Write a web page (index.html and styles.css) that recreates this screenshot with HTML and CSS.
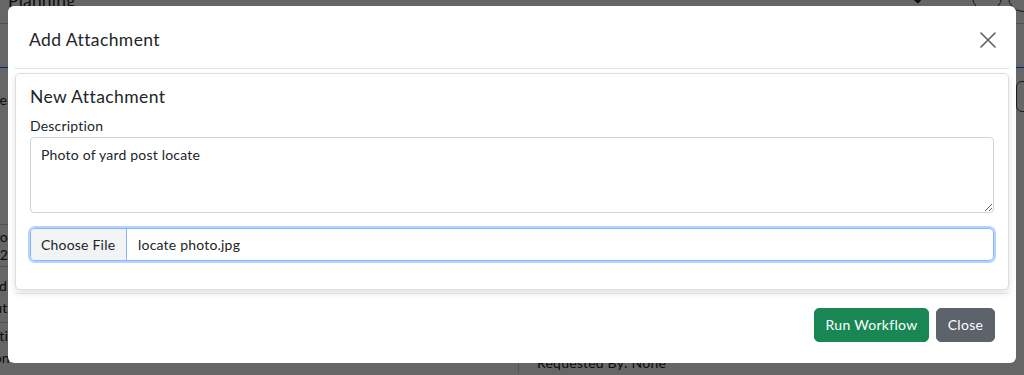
FILE: index.html
```html
<!DOCTYPE html>
<html lang="en">
<head>
<meta charset="utf-8">
<title>Add Attachment</title>
<link rel="stylesheet" href="styles.css">
</head>
<body>
<div class="page">
  <div class="topbar">
    <div class="page-title">Planning</div>
    <div class="top-icons">
      <span class="pencil"></span>
      <span class="circle"></span>
      <span class="circle"></span>
    </div>
  </div>
  <div class="tabs"></div>
  <div class="content">
    <div class="left-col">
      <div class="grp g1"><div class="ln">User</div></div>
      <div class="grp g2"><div class="ln">Info</div><div class="ln">1022</div></div>
      <div class="grp g3"><div class="ln">End:</div><div class="ln">Out</div></div>
      <div class="grp g4"><div class="ln">Action</div><div class="ln">None</div></div>
    </div>
    <div class="right-col">
      <div class="right-top"><span class="edit-btn">Edit</span></div>
      <div class="req">Requested By: None</div>
    </div>
  </div>
</div>

<div class="backdrop">
  <div class="modal">
    <div class="modal-inner">
      <div class="modal-header">
        <h5 class="modal-title">Add Attachment</h5>
        <button class="btn-close" aria-label="Close">
          <svg width="16" height="16" viewBox="0 0 16 16"><path d="M1 1 L15 15 M15 1 L1 15" stroke="#5f5f5f" stroke-width="1.6" fill="none" stroke-linecap="round"/></svg>
        </button>
      </div>
      <div class="modal-body">
        <div class="card">
          <div class="card-title">New Attachment</div>
          <label class="form-label">Description</label>
          <textarea class="form-control">Photo of yard post locate</textarea>
          <div class="file-input">
            <span class="file-btn">Choose File</span>
            <span class="file-name">locate photo.jpg</span>
          </div>
        </div>
      </div>
      <div class="modal-footer">
        <button class="btn btn-success">Run Workflow</button>
        <button class="btn btn-secondary">Close</button>
      </div>
    </div>
  </div>
</div>
</body>
</html>
```

FILE: styles.css
```css
* { box-sizing: border-box; }
html, body { margin: 0; padding: 0; }
body {
  font-family: "Lato", "Noto Sans", sans-serif;
  font-size: 14px;
  letter-spacing: 0.2px;
  color: #212529;
  background: #fff;
  overflow: hidden;
}

/* background page */
.page { width: 1024px; height: 375px; overflow: hidden; background: #fff; }
.topbar {
  margin-top: -10px;
  height: 34px;
  border-bottom: 1px solid #c8c8c8;
  display: flex;
  justify-content: space-between;
  padding-left: 8px;
}
.page-title { font-size: 17.5px; line-height: 21px; }
.top-icons { display: flex; gap: 6px; align-items: flex-start; margin-top: -8px; margin-right: -14px; }
.pencil { width: 7px; height: 22px; background: #222; transform: rotate(40deg); margin-right: 40px; }
.circle { width: 30px; height: 30px; border: 1px solid #333; border-radius: 50%; }
.tabs { height: 44px; border-bottom: 1px solid #0d6efd; }
.content { display: grid; grid-template-columns: 518px 1fr; }
.left-col { margin-left: -17px; }
.grp .ln { line-height: 22px; white-space: nowrap; }
.g1 { padding-top: 21px; height: 157px; border-bottom: 1px solid #ccc; }
.g2 { padding-top: 3px; border-bottom: 1px solid #ccc; height: 42px; }
.g2 .ln { line-height: 18px; }
.g3 { padding-top: 8px; height: 56px; border-bottom: 1px solid #ccc; }
.g4 { padding-top: 2px; }
.right-col { border-left: 1px solid #ccc; padding-left: 18px; }
.right-top { height: 240px; display: flex; justify-content: flex-end; padding-top: 13px; }
.edit-btn { border: 1px solid #444; border-radius: 6px; height: 31px; width: 40px; margin-right: -32px; padding: 5px 10px; }
.req { margin-top: 45px; line-height: 20px; }

/* overlay */
.backdrop {
  position: fixed;
  inset: 0;
  background: rgba(0, 0, 0, 0.6);
  padding: 6px 8px;
}
.modal {
  background: #fff;
  border-radius: 6px;
  width: 1008px;
}
.modal-inner { padding: 0 7px 7px; }
.modal-header {
  height: 63px;
  display: flex;
  align-items: center;
  justify-content: space-between;
  padding: 5px 13px 0 14px;
  border-bottom: 1px solid #dde1e7;
}
.modal-title {
  margin: 0;
  font-size: 17.5px;
  font-weight: 400;
  letter-spacing: 0.4px;
  line-height: 30px;
}
.btn-close {
  border: 0;
  background: transparent;
  padding: 0;
  width: 16px;
  height: 16px;
  display: flex;
}
.modal-body { padding: 4px 0 3px; }
.card {
  border: 1px solid rgba(0, 0, 0, 0.13);
  border-radius: 5px;
  box-shadow: 0 3px 6px rgba(0, 0, 0, 0.12);
  padding: 12px 14px 14px;
  display: flex;
  flex-direction: column;
}
.card-title { font-size: 17.5px; letter-spacing: 0.4px; line-height: 21px; margin-bottom: 8px; }
.form-label { display: block; line-height: 21px; margin-bottom: 1px; }
.form-control {
  display: block;
  width: 100%;
  height: 76px;
  border: 1px solid #ced4da;
  border-radius: 4px;
  padding: 6px 10px;
  font-family: inherit;
  font-size: 14px;
  letter-spacing: 0.2px;
  line-height: 21px;
  color: #212529;
  resize: vertical;
  margin: 0;
}
.file-input {
  margin-top: 15px;
  margin-bottom: 14px;
  height: 33px;
  display: flex;
  border: 1px solid #86b7fe;
  border-radius: 5px;
  box-shadow: 0 0 0 2px rgba(13, 110, 253, 0.3);
  overflow: hidden;
  line-height: 21px;
}
.file-btn {
  background: #f1f3f5;
  border-right: 1px solid #86b7fe;
  padding: 5px 10px;
  width: 96px;
}
.file-name { padding: 5px 11px; }
.modal-footer {
  border-top: 1px solid #dde1e7;
  padding: 14px 14px 14px;
  display: flex;
  justify-content: flex-end;
  gap: 7px;
}
.btn {
  font-family: inherit;
  font-size: 14px;
  letter-spacing: 0.3px;
  line-height: 20px;
  padding: 6px 0;
  border-radius: 5px;
  border: 1px solid transparent;
  color: #fff;
  height: 34px;
  text-align: center;
}
.btn-success { background: #198754; border-color: #198754; width: 115px; }
.btn-secondary { background: #5c636a; border-color: #5c636a; width: 59px; }
```
